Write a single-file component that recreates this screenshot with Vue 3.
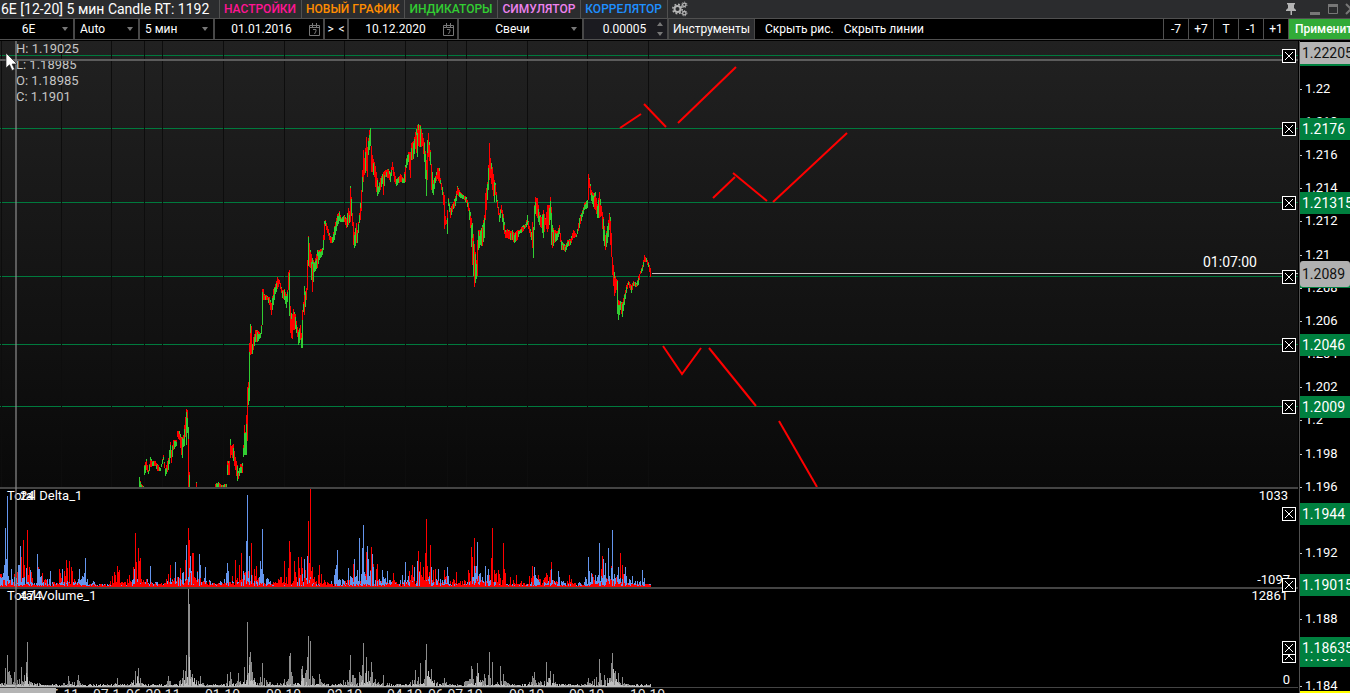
<script setup>
import { ref } from 'vue'

const symbol = ref('6E')
const mode = ref('Auto')
const period = ref('5 мин')
const chartType = ref('Свечи')
const dateFrom = ref('01.01.2016')
const dateTo = ref('10.12.2020')
const priceStep = ref('0.00005')

const tabs = [
  { text: 'НАСТРОЙКИ', cls: 'pink' },
  { text: 'НОВЫЙ ГРАФИК', cls: 'orange' },
  { text: 'ИНДИКАТОРЫ', cls: 'green' },
  { text: 'СИМУЛЯТОР', cls: 'violet' },
  { text: 'КОРРЕЛЯТОР', cls: 'blue' },
]
const shifts = ['-7', '+7', 'T', '-1', '+1']
const ohlc = ['H: 1.19025', 'L: 1.18985', 'O: 1.18985', 'C: 1.1901']

// Chart area height in chart units, all panels together
const AREA = 652
const pct = (y) => ({ top: (y / AREA) * 100 + '%' })

const gridX = [1, 61, 111, 144, 162, 223, 284, 344, 405, 447, 466, 527, 587, 648]
const levels = [14, 87, 161, 235, 303, 365]
const closeMarks = [615, 607, 15, 88, 162, 236, 304, 366, 473, 544]

const ticks = [
  '1.22', '1.218', '1.216', '1.214', '1.212', '1.21', '1.208', '1.206', '1.204', '1.202',
  '1.2', '1.198', '1.196', '1.194', '1.192', '1.19', '1.188', '1.186', '1.184',
].map((text, i) => ({ text, y: 47.6 + i * 33.18 }))

const tags = [
  { text: '', y: 14, cls: 'level' },
  { text: '1.22205', y: 12, cls: 'cursor' },
  { text: '1.2176', y: 88, cls: 'level' },
  { text: '1.21315', y: 162, cls: 'level' },
  { text: '', y: 236, cls: 'level' },
  { text: '1.2089', y: 233, cls: 'last' },
  { text: '1.2046', y: 304, cls: 'level' },
  { text: '1.2009', y: 366, cls: 'level' },
  { text: '1.1944', y: 473, cls: 'level' },
  { text: '1.19015', y: 544, cls: 'level' },
  { text: '1.1861', y: 615, cls: 'level' },
  { text: '1.18635', y: 607, cls: 'level' },
]

const times = [
  { text: '06.11', x: 44 }, { text: '07.1', x: 93 }, { text: '06.20.11', x: 126 },
  { text: '01.10', x: 205 }, { text: '00.10', x: 266 }, { text: '02.10', x: 327 },
  { text: '04.10', x: 387 }, { text: '06.07.10', x: 428 }, { text: '08.10', x: 509 },
  { text: '09.10', x: 569 }, { text: '10.10', x: 630 },
]

const drawings = [
  '620,87 641,73', '644,63 666,86', '678,82 736,26',
  '713,157 735,136', '733,132 767,160', '773,161 847,92',
  '663,305 682,333 701,307', '709,307 756,365', '779,380 817,446',
]

// x, high, low in window units (chart starts at 41)
const priceRuns = [
  `139 477 487 141 484 487 143 486 487 144 465 475 146 459 470 148 470 474 150 457 467 152 461 466
  155 461 466 157 464 471 160 468 471 163 455 460 165 468 476 168 458 470 170 442 458 171 450 463
  173 440 450 176 440 446 177 431 437 179 431 440 181 437 455 182 437 458 183 435 447 184 425 446
  185 417 437 186 409 445 187 410 433 188 427 487 189 472 487`,
  `196 482 487 196 482 487`,
  `215 484 487 218 482 487 221 485 487 226 484 487 227 461 475 229 461 475 230 439 458 231 446 455
  233 444 461 235 457 470 237 465 481 238 471 479 240 464 473 242 463 473 243 445 457 244 425 455
  245 432 455 246 415 455 247 387 441 248 382 405 249 343 401 250 324 355 251 326 354 252 344 354
  253 337 350 255 330 342 257 330 342 260 333 338 261 325 334 262 289 325 263 289 300 264 294 300 267 296 300
  269 297 305 271 303 315 273 289 305 275 284 294 277 277 289 279 280 284 282 290 298 284 289 300
  286 294 308 287 290 302 288 272 290 289 270 316 290 306 333 291 313 338 292 314 339 293 309 330
  295 314 329 297 327 337 298 330 345 300 325 340 301 333 348 302 310 348 303 302 312 304 286 315
  305 291 307 306 288 300 307 260 290 308 236 266 310 250 268 312 258 292 314 262 272 317 250 268
  319 250 260 322 248 255 323 235 250 324 221 240 325 220 226 327 226 233 330 236 243 332 237 243
  334 226 240 337 214 226 339 211 221 341 218 222 344 215 222 346 218 228 348 208 225 349 211 223
  350 186 222 351 197 216 352 213 226 353 222 245 354 232 248 356 223 243 357 230 243 359 213 223
  360 203 220 361 190 211 362 170 192 363 150 182 364 158 175 366 137 171 367 147 177 368 138 155
  369 130 150 370 128 146 371 146 172 372 155 172 374 162 177 375 166 187 377 178 196 378 186 194
  380 178 190 382 174 184 383 172 195 385 170 177 388 169 178 390 172 182 392 162 170 394 172 182
  396 179 186 398 177 183 400 174 182 403 178 183 405 165 182 406 158 168 408 152 162 410 152 178
  411 143 160 413 141 159 415 132 149 417 125 157 418 124 146 420 125 147 422 133 146 424 142 162
  426 160 196 427 140 180 428 133 157 430 150 165 431 164 190 433 180 195 435 176 183 437 168 179
  439 168 183 440 178 184 442 187 195 443 192 205 444 195 229 445 216 225 446 220 224 447 210 234
  448 198 206 450 208 218 453 202 209 455 196 206 457 186 195 460 192 198 463 195 199 466 197 203
  468 203 211 470 212 228 472 223 265 474 244 287 476 260 279 477 240 276 478 230 250 480 230 245
  482 225 246 484 215 238 485 193 220 487 182 200 488 165 190 489 143 180 490 158 178 492 167 190
  494 180 202 495 183 195 497 200 208 499 213 222 501 205 213 503 214 230 505 230 238 507 229 238
  510 231 240 512 230 240 514 233 243 517 230 240 519 230 234 522 226 232 525 224 228 527 215 225
  529 226 233 531 232 240 532 222 248 533 227 258 534 205 230 535 197 214 537 198 218 539 212 225
  541 217 228 543 210 238 545 218 225 547 205 232 549 205 225 550 197 220 551 207 245 552 225 248
  554 230 243 557 231 240 559 225 234 561 240 250 563 243 250 565 245 252 567 240 247 570 239 245
  573 230 238 576 234 237 579 218 228 582 210 217 584 203 210 587 200 208 588 174 200 589 178 188
  591 190 201 593 193 207 595 192 210 597 204 218 599 192 218 601 206 216 603 217 241 605 235 250
  607 226 243 609 213 230 610 217 245 611 233 257 612 257 275 614 272 296 616 279 290 617 280 314
  618 300 320 620 301 310 622 302 317 624 294 305 626 285 293 628 281 285 631 285 293 633 281 286
  636 283 287 638 276 285 640 271 274 642 265 271 644 255 262 646 258 262 648 262 267 650 268 277`,
]

// Cheap repeatable noise in 0..1
function noise(n) {
  const v = Math.sin(n * 127.1 + 11.7) * 43758.5453
  return v - Math.floor(v)
}

function buildCandles() {
  let up = ''
  let down = ''
  for (const run of priceRuns) {
    const v = run.trim().split(/\s+/).map(Number)
    for (let i = 0; i + 3 < v.length; i += 3) {
      const [x0, h0, l0, x1, h1, l1] = v.slice(i, i + 6)
      const last = i + 6 >= v.length
      const end = last ? x1 + 1 : x1
      for (let x = x0; x < end; x++) {
        const t = x1 === x0 ? 0 : (x - x0) / (x1 - x0)
        const hi = Math.round(h0 + (h1 - h0) * t) - 41
        const lo = Math.max(hi + 2, Math.round(l0 + (l1 - l0) * t) - 41)
        const rising = h1 + l1 < h0 + l0
        const isUp = noise(x) < (rising ? 0.75 : 0.36)
        const cut = hi + Math.round((lo - hi) * noise(x + 900) * 0.35)
        const first = `M${x} ${hi}h1V${cut}h-1z`
        const rest = `M${x} ${cut}h1V${lo}h-1z`
        if (isUp) {
          down += first
          up += rest
        } else {
          up += noise(x + 50) > 0.6 ? first : ''
          down += noise(x + 50) > 0.6 ? rest : `M${x} ${hi}h1V${lo}h-1z`
        }
      }
    }
  }
  return { up, down }
}

const bluePeaks = [
  5, 59, 7, 91, 6, 28, 11, 18, 18, 22, 20, 41, 26, 19, 30, 17, 37, 33, 50, 16, 62, 18, 79, 18, 85, 29,
  134, 18, 150, 21, 175, 25, 186, 42, 190, 31, 199, 33, 205, 20, 227, 24, 246, 46, 247, 92, 249, 31,
  260, 26, 262, 58, 304, 28, 307, 31, 337, 37, 348, 19, 354, 28, 359, 49, 362, 39, 363, 62, 367, 41, 368, 28,
  372, 33, 382, 17, 387, 16, 405, 25, 414, 20, 417, 26, 431, 20, 438, 18, 447, 20, 474, 21, 477, 45,
  485, 21, 488, 18, 534, 20, 551, 18, 558, 16, 588, 30, 599, 44, 603, 28, 605, 24, 608, 39, 612, 57, 618, 20,
  625, 20, 632, 11, 642, 17,
]
const redPeaks = [
  0, 13, 1, 13, 14, 13, 21, 30, 23, 47, 27, 57, 29, 20, 42, 14, 38, 20, 59, 18, 66, 27, 69, 26, 71, 20,
  114, 15, 117, 21, 119, 17, 135, 54, 138, 39, 140, 29, 133, 20, 170, 22, 180, 19, 185, 27, 188, 59, 189, 47,
  192, 34, 193, 34, 235, 27, 239, 22, 241, 34, 251, 44, 256, 21, 284, 26, 289, 46, 290, 35, 294, 26, 298, 30,
  301, 30, 308, 66, 310, 98, 312, 20, 319, 22, 353, 23, 366, 35, 371, 40, 373, 23, 377, 23, 393, 14,
  409, 16, 412, 22, 418, 36, 420, 25, 425, 34, 426, 68, 430, 42, 435, 18, 444, 17, 456, 15, 469, 14, 471, 40,
  472, 30, 474, 49, 492, 59, 491, 29, 494, 17, 498, 17, 503, 44, 516, 12, 532, 21, 538, 12, 546, 14, 551, 25,
  569, 12, 592, 13, 602, 31, 611, 21, 620, 34, 622, 22,
]
const volumePeaks = [
  5, 19, 7, 32, 10, 12, 14, 15, 21, 20, 24, 12, 26, 25, 27, 45, 68, 11, 78, 12, 117, 9, 135, 16, 138, 19,
  168, 11, 183, 17, 186, 32, 188, 98, 189, 83, 190, 17, 192, 13, 200, 11, 227, 13, 230, 15, 238, 14, 244, 20,
  247, 65, 249, 30, 250, 35, 251, 25, 262, 24, 289, 31, 290, 34, 291, 15, 301, 18, 302, 21, 307, 30, 308, 51,
  310, 46, 319, 13, 350, 32, 352, 12, 359, 15, 362, 22, 363, 44, 366, 30, 368, 16, 371, 25, 383, 12, 415, 17,
  420, 24, 425, 27, 426, 43, 431, 18, 444, 9, 471, 21, 472, 18, 477, 24, 484, 13, 489, 35, 492, 25, 500, 21,
  503, 13, 532, 11, 534, 15, 546, 25, 550, 16, 553, 13, 588, 9, 599, 28, 604, 12, 611, 24, 612, 34, 615, 16,
  618, 14, 622, 10,
]

// Exact peaks plus a noisy floor that swells around them
function buildBars(peaks, seed, scale, spread) {
  let d = ''
  for (let x = 0; x < 651; x++) {
    let env = 2
    let exact = 0
    for (let i = 0; i < peaks.length; i += 2) {
      const dist = Math.abs(peaks[i] - x)
      if (dist === 0) exact = Math.max(exact, peaks[i + 1])
      env = Math.max(env, Math.min(34, peaks[i + 1]) * scale * Math.exp(-dist / spread))
    }
    const n = noise(x + seed)
    const h = exact || Math.round(1 + env * Math.pow(n, 1.5))
    d += `M${x} 98v-${h}h1v${h}z`
  }
  return d
}

const candles = buildCandles()
const blueBars = buildBars(bluePeaks, 10, 0.75, 6)
const redBars = buildBars(redPeaks, 300, 0.9, 6)
const redFloor = buildBars([4, 7, 68, 5, 138, 9, 190, 14, 242, 8, 300, 12, 420, 12, 476, 8, 610, 8], 720, 1, 20)
const volumeBars = buildBars(volumePeaks, 40, 0.65, 6)
const volumeCore = buildBars([26, 14, 137, 10, 189, 30, 249, 22, 302, 12, 366, 16, 428, 16, 478, 14, 549, 9, 613, 18], 77, 0.9, 5)
</script>

<template>
  <div class="terminal">
    <header class="titlebar">
      <h1 class="title">6E [12-20] 5 мин Candle RT: 1192</h1>
      <nav class="tabs">
        <button v-for="tab in tabs" :key="tab.text" type="button" class="tab" :class="tab.cls">{{ tab.text }}</button>
      </nav>
      <button type="button" class="icon-btn gears" aria-label="Параметры">
        <svg width="16" height="16" viewBox="0 0 16 16" fill="none" stroke="#b4b4b4">
          <circle cx="5.5" cy="8" r="3" stroke-width="2" />
          <circle cx="5.5" cy="8" r="4.7" stroke-width="1.6" stroke-dasharray="1.85 1.84" />
          <circle cx="12.3" cy="3.8" r="1.7" stroke-width="1.3" />
          <circle cx="12.3" cy="3.8" r="2.7" stroke-width="1" stroke-dasharray="1.2 1.22" />
          <circle cx="12.3" cy="12.2" r="1.7" stroke-width="1.3" />
          <circle cx="12.3" cy="12.2" r="2.7" stroke-width="1" stroke-dasharray="1.2 1.22" />
        </svg>
      </button>
      <div class="window-btns">
        <button type="button" class="icon-btn" aria-label="Закрепить">
          <svg width="12" height="12" viewBox="0 0 12 12" fill="#b4b4b4">
            <path d="M2 0h8v1.500H9V5l2 2v1H7v4H5.500V8H1V7l2-2V1.500H2z" />
          </svg>
        </button>
        <button type="button" class="icon-btn" aria-label="Свернуть">
          <svg width="12" height="12" viewBox="0 0 12 12"><path d="M1 9h10v3H1z" fill="#777" /></svg>
        </button>
        <button type="button" class="icon-btn" aria-label="Развернуть">
          <svg width="12" height="12" viewBox="0 0 12 12" fill="none" stroke="#777">
            <path d="M1.500 2.500h9v8h-9z" /><path d="M1 2.500h10" stroke-width="3" />
          </svg>
        </button>
        <button type="button" class="icon-btn" aria-label="Закрыть">
          <svg width="12" height="12" viewBox="0 0 12 12" stroke="#777" stroke-width="2"><path d="M1 1l10 10M11 1L1 11" /></svg>
        </button>
      </div>
    </header>

    <div class="toolbar">
      <div class="cell w-symbol">
        <select v-model="symbol" class="centered" aria-label="Инструмент"><option>6E</option></select>
        <span class="caret"></span>
      </div>
      <div class="cell w-mode">
        <select v-model="mode" aria-label="Режим"><option>Auto</option></select>
        <span class="caret"></span>
      </div>
      <div class="cell w-symbol">
        <select v-model="period" aria-label="Период"><option>5 мин</option></select>
        <span class="caret"></span>
      </div>
      <div class="cell w-date">
        <input v-model="dateFrom" type="text" aria-label="Дата начала" />
        <svg class="calendar" width="11" height="13" viewBox="0 0 11 13" fill="none" stroke="#777">
          <path d="M.5 2.500h10v10H.5zM3.500 0v4M7.500 0v4M1 4.500h9M4 6.500h3v1.500l-1.500 3" />
        </svg>
      </div>
      <div class="cell arrows">
        <button type="button" class="arrow">&gt;</button>
        <button type="button" class="arrow">&lt;</button>
      </div>
      <div class="cell w-date">
        <input v-model="dateTo" type="text" aria-label="Дата конца" />
        <svg class="calendar" width="11" height="13" viewBox="0 0 11 13" fill="none" stroke="#777">
          <path d="M.5 2.500h10v10H.5zM3.500 0v4M7.500 0v4M1 4.500h9M4 6.500h3v1.500l-1.500 3" />
        </svg>
      </div>
      <div class="cell w-type">
        <select v-model="chartType" class="centered" aria-label="Тип графика"><option>Свечи</option></select>
        <span class="caret"></span>
      </div>
      <div class="cell w-step">
        <input v-model="priceStep" type="text" aria-label="Шаг цены" />
        <div class="spin">
          <button type="button" class="spin-up" aria-label="Больше"></button>
          <button type="button" class="spin-down" aria-label="Меньше"></button>
        </div>
      </div>
      <button type="button" class="cell tools">Инструменты</button>
      <button type="button" class="plain">Скрыть рис.</button>
      <button type="button" class="plain">Скрыть линии</button>
      <div class="shifts">
        <button v-for="s in shifts" :key="s" type="button" class="shift">{{ s }}</button>
      </div>
      <button type="button" class="apply">Применить</button>
    </div>

    <main class="workspace">
      <div class="charts">
        <section class="panel price">
          <svg viewBox="0 0 1298 446" preserveAspectRatio="none" shape-rendering="crispEdges">
            <rect v-for="y in levels" :key="y" x="0" :y="y" width="1298" height="1" fill="#007a3d" />
            <rect v-for="x in gridX" :key="x" :x="x" y="0" width="1" height="446" fill="#0d0d0d" />
            <path :d="candles.up" fill="#32cd32" />
            <path :d="candles.down" fill="#f00" />
            <rect x="652" y="232" width="646" height="1" fill="#c4c4c4" />
            <g fill="none" stroke="#f00" stroke-width="2" shape-rendering="auto">
              <polyline v-for="d in drawings" :key="d" :points="d" />
            </g>
          </svg>
          <ul class="ohlc">
            <li v-for="line in ohlc" :key="line">{{ line }}</li>
          </ul>
        </section>

        <section class="panel">
          <svg viewBox="0 0 1298 98" preserveAspectRatio="none" shape-rendering="crispEdges">
            <path :d="redBars" fill="#f00" />
            <path :d="blueBars" fill="#6495ed" />
            <path :d="redFloor" fill="#f00" />
          </svg>
          <span class="name">Total Delta_1</span>
          <span class="name value">24</span>
          <span class="max">1033</span>
          <span class="min">-1097</span>
        </section>

        <section class="panel volume">
          <svg viewBox="0 0 1298 98" preserveAspectRatio="none" shape-rendering="crispEdges">
            <path :d="volumeBars" fill="#8c8c8c" />
            <path :d="volumeCore" fill="#bebebe" />
          </svg>
          <span class="name">Total Volume_1</span>
          <span class="name value">474</span>
          <span class="max">12861</span>
          <span class="min">0</span>
        </section>

        <div class="timeline">
          <svg width="100%" height="18">
            <text v-for="t in times" :key="t.x" :x="t.x" y="12">{{ t.text }}</text>
          </svg>
          <div class="thumb"></div>
        </div>

        <div class="cross-h" :style="pct(18)"></div>
        <div class="cross-v"></div>
        <span class="countdown" :style="pct(221)">01:07:00</span>
        <button
          v-for="y in closeMarks"
          :key="y"
          type="button"
          class="close"
          :style="pct(y)"
          aria-label="Удалить линию"
        >
          <svg width="10" height="10" viewBox="0 0 10 10" stroke="#fff"><path d="M1 1l8 8M9 1L1 9" /></svg>
        </button>
        <svg class="pointer" width="14" height="20" viewBox="0 0 14 20">
          <path d="M1 1v15l3.500-3.200L7 18.500l2.600-1.200-2.500-5.300H12z" fill="#fff" stroke="#222" stroke-width=".7" />
        </svg>
      </div>

      <aside class="scale">
        <span v-for="t in ticks" :key="t.text" class="tick" :style="pct(t.y)">{{ t.text }}</span>
        <span v-for="t in tags" :key="t.y" class="tag" :class="t.cls" :style="pct(t.y)">{{ t.text }}</span>
        <span class="limit"></span>
      </aside>
    </main>
  </div>
</template>

<style>
body {
  margin: 0;
  background: #000;
  overflow: hidden;
}
</style>

<style scoped>
.terminal {
  height: 100vh;
  display: flex;
  flex-direction: column;
  overflow: hidden;
  background: #000;
  color: #fff;
  font-family: Roboto, 'Liberation Sans', sans-serif;
  font-size: 13px;
}

.terminal *,
.terminal *::before {
  box-sizing: border-box;
}

button,
input,
select {
  margin: 0;
  padding: 0;
  border: 0;
  border-radius: 0;
  background: none;
  color: inherit;
  font: inherit;
  white-space: nowrap;
}

/* Title bar */
.titlebar {
  display: flex;
  flex: none;
  height: 19px;
  background: #2b2c2e;
  border-bottom: 1px solid #505050;
}

.title {
  flex: none;
  width: 220px;
  margin: 0;
  padding-left: 1px;
  border-right: 1px solid #505050;
  font-size: 14px;
  font-weight: 400;
  line-height: 18px;
  white-space: nowrap;
}

.tabs {
  display: flex;
}

.tab {
  padding: 0 5px 0 4px;
  border-right: 1px solid #505050;
  font-size: 12px;
  font-weight: 500;
  line-height: 18px;
}

.pink { color: #ff1493; }
.orange { color: #ff8c00; }
.green { color: #32cd32; }
.violet { color: #ee82ee; }
.blue { color: #1e90ff; }

.icon-btn {
  display: flex;
  align-items: center;
}

.gears {
  padding-left: 4px;
}

.window-btns {
  display: flex;
  gap: 6px;
  margin-left: auto;
  margin-right: -7px;
}

.window-btns .icon-btn:first-child {
  margin-right: 6px;
}

/* Toolbar */
.toolbar {
  display: flex;
  flex: none;
  height: 21px;
  margin-bottom: 1px;
  border-bottom: 1px solid #505050;
  font-size: 12px;
  line-height: 20px;
}

.cell {
  display: flex;
  flex: none;
  align-items: center;
  position: relative;
  border-right: 2px solid #484848;
}

.cell select,
.cell input {
  width: 100%;
  height: 20px;
  outline: none;
}

.cell select {
  appearance: none;
  padding-left: 5px;
}

.cell .centered {
  padding-left: 0;
  padding-right: 16px;
  text-align-last: center;
}

.cell input {
  flex: 1;
  min-width: 0;
  padding-left: 3px;
  text-align: center;
}

.w-symbol { width: 75px; }
.w-mode { width: 65px; }
.w-date { width: 110px; }
.w-type { width: 125px; }

.w-step {
  width: 85px;
  background: #1b1b20;
}

.w-step input {
  padding-left: 8px;
}

.caret {
  position: absolute;
  right: 5px;
  top: 8px;
  border: 3px solid transparent;
  border-top: 4px solid #777;
  border-bottom: 0;
  pointer-events: none;
}

.calendar {
  flex: none;
  margin: 0 3px 0 4px;
}

.arrows {
  width: 24px;
  justify-content: space-around;
}

.spin {
  display: flex;
  flex-direction: column;
  gap: 6px;
  padding-right: 4px;
}

.spin-up,
.spin-down {
  width: 6px;
  height: 4px;
  background: #777;
  clip-path: polygon(50% 0, 100% 100%, 0 100%);
}

.spin-down {
  clip-path: polygon(0 0, 100% 0, 50% 100%);
}

.tools {
  width: 86px;
  justify-content: center;
  background: #2b2c2e;
  border-right-width: 1px;
}

.plain {
  padding-left: 10px;
}

.shifts {
  display: flex;
  margin-left: auto;
  border-left: 1px solid #505050;
}

.shift {
  width: 25px;
  border-right: 1px solid #505050;
}

.apply {
  width: 61px;
  overflow: hidden;
  padding-left: 6px;
  background: #32ab38;
  font-weight: 500;
  text-align: left;
}

/* Charts */
.workspace {
  flex: 1;
  min-height: 0;
  display: flex;
}

.charts {
  flex: 1;
  min-width: 0;
  position: relative;
  display: grid;
  grid-template-rows: 448fr 100fr 99fr 5fr;
  overflow: hidden;
}

.panel {
  position: relative;
  min-height: 0;
  border-bottom: 2px solid #444;
}

.panel > svg {
  display: block;
  width: 100%;
  height: 100%;
}

.price {
  background: linear-gradient(#212121, #090909);
}

.volume {
  border-bottom-width: 1px;
}

.ohlc {
  position: absolute;
  left: 16px;
  top: 0;
  margin: 0;
  padding: 0;
  list-style: none;
  color: #c4c4c4;
  line-height: 16px;
}

.name,
.max,
.min {
  position: absolute;
  line-height: 14px;
}

.name {
  left: 7px;
  top: 0;
}

.value {
  left: 20px;
}

.max {
  right: 10px;
  top: 0;
}

.min {
  right: 8px;
  bottom: 0;
}

.timeline {
  position: relative;
  overflow: hidden;
}

.timeline text {
  fill: #ddd;
  font-size: 14px;
}

.timeline > svg {
  display: block;
}

.thumb {
  position: absolute;
  left: 0;
  top: 0;
  width: 56px;
  height: 100%;
  background: #b4b4b4;
}

.cross-h {
  position: absolute;
  left: 0;
  right: 0;
  height: 2px;
  background: #5c5c5c;
}

.cross-v {
  position: absolute;
  left: 15px;
  top: 0;
  bottom: 5px;
  width: 2px;
  background: rgba(140, 140, 140, 0.6);
}

.countdown {
  position: absolute;
  right: 41px;
  font-size: 14px;
  line-height: 16px;
  transform: translateY(-50%);
}

.close {
  position: absolute;
  right: 2px;
  width: 14px;
  height: 14px;
  display: flex;
  align-items: center;
  justify-content: center;
  background: #000;
  border: 1px solid #fff;
  transform: translateY(-50%);
}

.close svg {
  flex: none;
}

.pointer {
  position: absolute;
  left: 5px;
  top: 11px;
}

/* Price scale */
.scale {
  position: relative;
  flex: none;
  width: 51px;
  margin-left: 1px;
  border-left: 1px solid #505050;
  overflow: hidden;
}

.tick {
  position: absolute;
  left: 5px;
  line-height: 16px;
  transform: translateY(-50%);
}

.tick::before {
  content: '';
  position: absolute;
  left: -5px;
  top: 8px;
  width: 2px;
  height: 1px;
  background: #ccc;
}

.tag {
  position: absolute;
  left: 0;
  right: 0;
  height: 22px;
  padding-left: 2px;
  font-size: 14px;
  line-height: 22px;
  transform: translateY(-50%);
}

.level {
  background: #00803f;
}

.cursor {
  background: #b4b4b4;
  color: #111;
}

.last {
  height: 26px;
  border-radius: 3px;
  background: #b0b0b0;
  color: #111;
  line-height: 26px;
}

.limit {
  position: absolute;
  left: 0;
  right: 0;
  bottom: 0;
  height: 2px;
  background: #ff0;
}
</style>
